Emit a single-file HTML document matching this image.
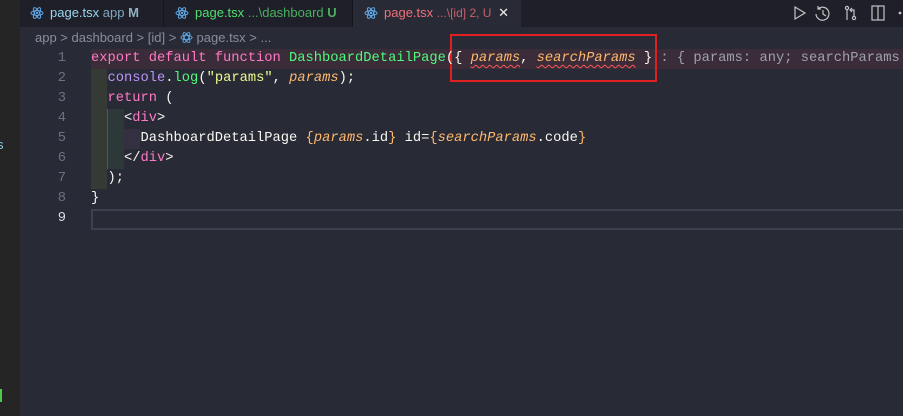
<!DOCTYPE html>
<html><head><style>
body{margin:0;width:903px;height:416px;overflow:hidden;background:#282a36;font-family:"Liberation Sans",sans-serif;position:relative}
.side{position:absolute;left:0;top:0;width:20px;height:416px;background:#252526}
.tabs{position:absolute;left:0;top:0;width:903px;height:27px;background:#1e1f28}
.tab{position:absolute;top:0;height:27px;font-size:13px;line-height:25px;white-space:nowrap;overflow:hidden}
.tab svg{vertical-align:-3px;margin-right:6px}
.bc{position:absolute;left:20px;top:27px;width:868px;height:21px;background:#282a36;color:#8a8d9c;font-size:13px;line-height:21px;padding-left:15px}
.code{position:absolute;left:20px;top:48px;width:883px;height:200px;overflow:hidden;font-family:"Liberation Mono",monospace;font-size:13.75px}
.ln{position:absolute;left:0;width:46px;text-align:right;color:#6d7083;height:20px;line-height:20px}
.l{position:absolute;left:71px;height:20px;line-height:20px;white-space:pre;color:#f8f8f2}
.k{color:#ff79c6}.f{color:#50fa7b}.s{color:#f1fa8c}.p{color:#ffb86c;font-style:italic}.g{color:#9ea1ae}.c{color:#8be9fd}
.sq{text-decoration:underline wavy #ff5555;text-decoration-thickness:1px;text-underline-offset:3px}
</style></head><body>
<div class="tabs">
 <div class="tab" style="left:0;width:163px;border-right:1px solid #15161c;color:#9ad7f0"><span style="color:#ccc;margin-left:5px">·</span><span style="position:absolute;left:30px">
 <svg width="14" height="14" viewBox="0 0 14 14"><g fill="none" stroke="#5ea7e6" stroke-width="1"><ellipse cx="7" cy="7" rx="6" ry="2.4"/><ellipse cx="7" cy="7" rx="6" ry="2.4" transform="rotate(60 7 7)"/><ellipse cx="7" cy="7" rx="6" ry="2.4" transform="rotate(120 7 7)"/></g><circle cx="7" cy="7" r="1.2" fill="#5ea7e6"/></svg>page.tsx <span style="color:#7fa8c0">app</span> <b style="color:#8fb2c4">M</b></span></div>
 <div class="tab" style="left:164px;width:188px;border-right:1px solid #15161c;color:#50e070"><span style="position:absolute;left:11px">
 <svg width="14" height="14" viewBox="0 0 14 14"><g fill="none" stroke="#5ea7e6" stroke-width="1"><ellipse cx="7" cy="7" rx="6" ry="2.4"/><ellipse cx="7" cy="7" rx="6" ry="2.4" transform="rotate(60 7 7)"/><ellipse cx="7" cy="7" rx="6" ry="2.4" transform="rotate(120 7 7)"/></g><circle cx="7" cy="7" r="1.2" fill="#5ea7e6"/></svg>page.tsx <span style="color:#48b060">...\dashboard</span> <b style="color:#48b060">U</b></span></div>
 <div class="tab" style="left:353px;width:168px;background:#282a36;height:27px;color:#f0707a"><span style="position:absolute;left:11px">
 <svg width="14" height="14" viewBox="0 0 14 14"><g fill="none" stroke="#5ea7e6" stroke-width="1"><ellipse cx="7" cy="7" rx="6" ry="2.4"/><ellipse cx="7" cy="7" rx="6" ry="2.4" transform="rotate(60 7 7)"/><ellipse cx="7" cy="7" rx="6" ry="2.4" transform="rotate(120 7 7)"/></g><circle cx="7" cy="7" r="1.2" fill="#5ea7e6"/></svg>page.tsx <span style="color:#c86068;font-size:12px">...\[id] 2, U</span> <span style="color:#eee;margin-left:3px">✕</span></span></div>
 <svg style="position:absolute;left:792px;top:4px" width="110" height="18" viewBox="0 0 110 18" fill="none" stroke="#c5c5c5" stroke-width="1.2">
  <path d="M3 3 L13 9 L3 15 Z"/>
  <path d="M26 5 A6.5 6.5 0 1 1 24 10 M26 2 V5 H29 M31 6 V10 L34 12"/>
  <circle cx="55" cy="4" r="1.6"/><circle cx="62" cy="14" r="1.6"/><path d="M55 6 V16 M62 12 V6 H58 M60 4 L58 6 L60 8"/>
  <rect x="80" y="2" width="12" height="14"/><path d="M86 2 V16"/>
  <circle cx="108" cy="9" r=".8" fill="#c5c5c5"/>
 </svg>
</div>
<div class="side"><span style="position:absolute;left:-3px;top:137px;color:#8cd;font-size:13px">s</span><div style="position:absolute;left:0;top:389px;width:2px;height:13px;background:#4ec94e"></div></div>
<div class="bc">app &gt; dashboard &gt; [id] &gt; <svg width="13" height="13" viewBox="0 0 14 14" style="vertical-align:-2px"><g fill="none" stroke="#5ea7e6" stroke-width="1"><ellipse cx="7" cy="7" rx="6" ry="2.4"/><ellipse cx="7" cy="7" rx="6" ry="2.4" transform="rotate(60 7 7)"/><ellipse cx="7" cy="7" rx="6" ry="2.4" transform="rotate(120 7 7)"/></g></svg> page.tsx &gt; ...</div>
<div style="position:absolute;left:91px;top:49px;width:812px;height:20px;background:#3a2c38"></div>
<div style="position:absolute;left:91px;top:69px;width:16px;height:120px;background:#363a34"></div>
<div style="position:absolute;left:107px;top:109px;width:16px;height:60px;background:#2d3838;border-left:1px solid #555"></div>
<div style="position:absolute;left:124px;top:129px;width:16px;height:20px;background:#352f42"></div>
<div style="position:absolute;left:91px;top:209px;width:810px;height:17px;border:2px solid #3d404e;border-right:none"></div>
<div style="position:absolute;left:450px;top:34px;width:207px;height:48px;border:2px solid #e02020;box-sizing:border-box"></div>
<div class="code">
<div class="ln" style="top:1px">1</div><div class="ln" style="top:21px">2</div><div class="ln" style="top:41px">3</div><div class="ln" style="top:61px">4</div><div class="ln" style="top:81px">5</div><div class="ln" style="top:101px">6</div><div class="ln" style="top:121px">7</div><div class="ln" style="top:141px">8</div><div class="ln" style="top:161px;color:#ddd">9</div>
<div class="l" style="top:1px"><span class="k">export default function</span> <span class="f">DashboardDetailPage</span>({ <span class="p sq">params</span>, <span class="p sq">searchParams</span> } <span class="g">: { params: any; searchParams:</span></div>
<div class="l" style="top:21px">  <span style="color:#bd93f9">console</span>.<span class="f">log</span>(<span class="s">"params"</span>, <span class="p">params</span>);</div>
<div class="l" style="top:41px">  <span class="k">return</span> (</div>
<div class="l" style="top:61px">    &lt;<span class="k">div</span>&gt;</div>
<div class="l" style="top:81px">      DashboardDetailPage <span style="color:#ffb86c">{</span><span class="p">params</span>.id<span style="color:#ffb86c">}</span> id=<span style="color:#ffb86c">{</span><span class="p">searchParams</span>.code<span style="color:#ffb86c">}</span></div>
<div class="l" style="top:101px">    &lt;/<span class="k">div</span>&gt;</div>
<div class="l" style="top:121px">  );</div>
<div class="l" style="top:141px">}</div>
</div>
</body></html>
